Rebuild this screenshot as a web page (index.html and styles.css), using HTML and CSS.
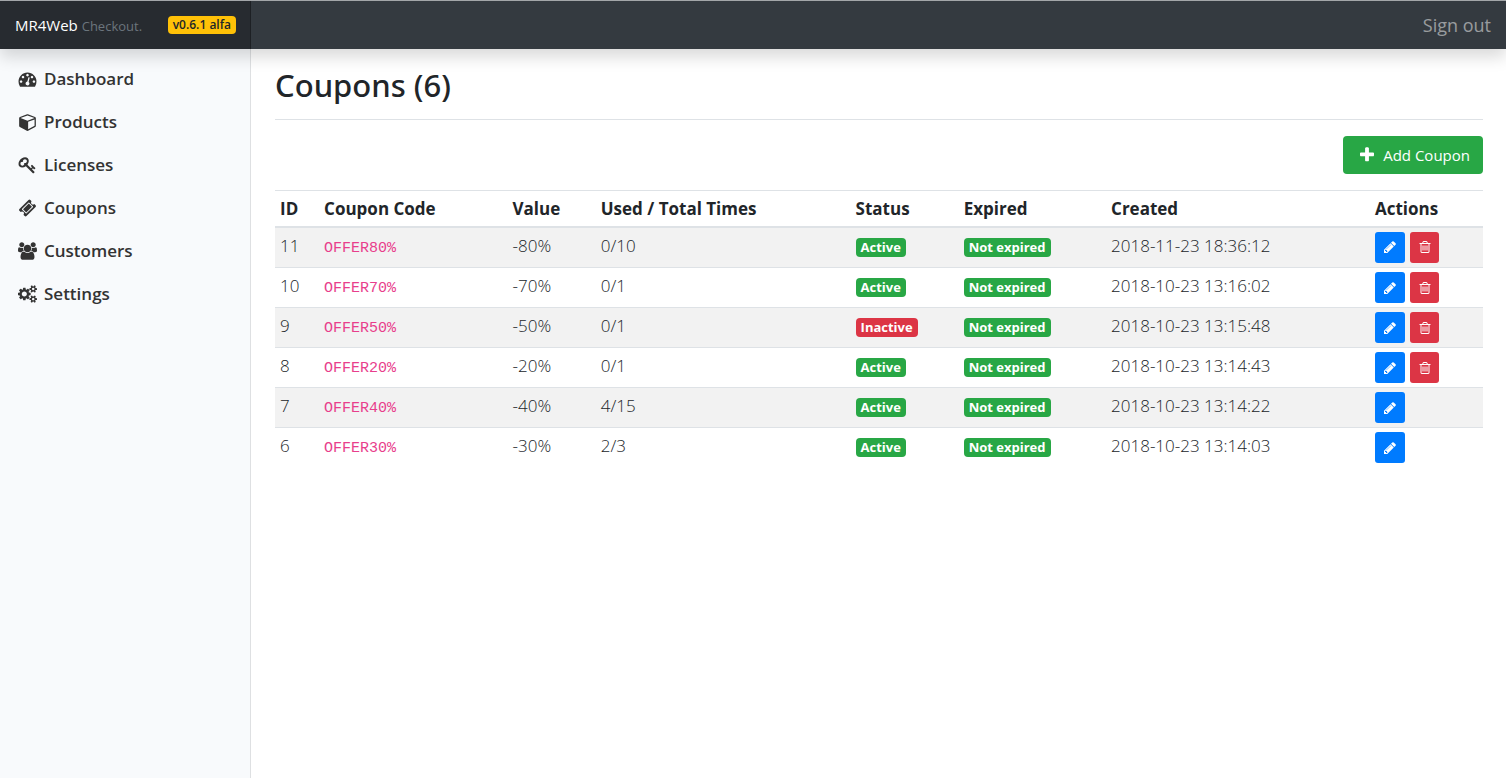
FILE: index.html
```html
<!DOCTYPE html>
<html lang="en">
<head>
<meta charset="utf-8">
<meta name="viewport" content="width=device-width, initial-scale=1">
<title>Coupons - MR4Web Checkout</title>
<link rel="stylesheet" href="styles.css">
</head>
<body>
<svg class="sprite" aria-hidden="true">
  <symbol id="i-dashboard" viewBox="0 0 1792 1792"><path d="M384 1152q0-53-37.5-90.5t-90.5-37.5-90.5 37.5-37.5 90.5 37.5 90.5 90.5 37.5 90.5-37.5 37.5-90.5zm192-448q0-53-37.5-90.5t-90.5-37.5-90.5 37.5-37.5 90.5 37.5 90.5 90.5 37.5 90.5-37.5 37.5-90.5zm428 481l101-382q6-26-7.5-48.5t-38.5-29.5-48 6.5-30 39.5l-101 382q-60 5-107 43.5t-63 98.5q-20 77 20 146t117 89 146-20 89-117q16-60-6-117t-72-91zm660-33q0-53-37.5-90.5t-90.5-37.5-90.5 37.5-37.5 90.5 37.5 90.5 90.5 37.5 90.5-37.5 37.5-90.5zm-640-640q0-53-37.5-90.5t-90.5-37.5-90.5 37.5-37.5 90.5 37.5 90.5 90.5 37.5 90.5-37.5 37.5-90.5zm448 192q0-53-37.5-90.5t-90.5-37.5-90.5 37.5-37.5 90.5 37.5 90.5 90.5 37.5 90.5-37.5 37.5-90.5zm320 448q0 261-141 483-19 29-54 29h-1402q-35 0-54-29-141-221-141-483 0-182 71-348t191-286 286-191 348-71 348 71 286 191 191 286 71 348z"/></symbol>
  <symbol id="i-cube" viewBox="0 0 1664 1792"><path d="M896 1629l640-349v-636l-640 233v752zm-64-865l698-254-698-254-698 254zm832-252v768q0 35-18 65t-49 47l-704 384q-28 16-61 16t-61-16l-704-384q-31-17-49-47t-18-65v-768q0-40 23-73t61-47l704-256q22-8 44-8t44 8l704 256q38 14 61 47t23 73z"/></symbol>
  <symbol id="i-key" viewBox="0 0 1792 1792"><path d="M832 512q0-80-56-136t-136-56-136 56-56 136q0 42 19 83-41-19-83-19-80 0-136 56t-56 136 56 136 136 56 136-56 56-136q0-42-19-83 41 19 83 19 80 0 136-56t56-136zm851 704q0 17-49 66t-66 49q-9 0-28.5-16t-36.5-33-38.5-40-24.5-26l-96 96 220 220q28 28 28 68 0 42-39 81t-81 39q-40 0-68-28l-671-671q-176 131-365 131-163 0-265.5-102.5t-102.5-265.5q0-160 95-313t248-248 313-95q163 0 265.5 102.5t102.5 265.5q0 189-131 365l355 355 96-96q-3-3-26-24.5t-40-38.5-33-36.5-16-28.5q0-17 49-66t66-49q13 0 23 10 6 6 46 44.5t82 79.5 86.5 86 73 78 28.5 41z"/></symbol>
  <symbol id="i-ticket" viewBox="0 0 1792 1792"><path d="M1024 452l316 316-572 572-316-316zm-211 979l618-618q19-19 19-45t-19-45l-362-362q-18-18-45-18t-45 18l-618 618q-19 19-19 45t19 45l362 362q18 18 45 18t45-18zm889-637l-907 908q-37 37-90.5 37t-90.5-37l-126-126q56-56 56-136t-56-136-136-56-136 56l-125-126q-37-37-37-90.5t37-90.5l907-906q37-37 90.5-37t90.5 37l125 125q-56 56-56 136t56 136 136 56 136-56l126 125q37 37 37 90.5t-37 90.5z"/></symbol>
  <symbol id="i-users" viewBox="0 0 1920 1792"><path d="M593 896q-162 5-265 128h-134q-82 0-138-40.5t-56-118.5q0-353 124-353 6 0 43.5 21t97.5 42.5 119 21.5q67 0 133-23-5 37-5 66 0 139 81 256zm1071 637q0 120-73 189.5t-194 69.5h-874q-121 0-194-69.5t-73-189.5q0-53 3.5-103.5t14-109 26.5-108.5 43-97.5 62-81 85.5-53.5 111.5-20q10 0 43 21.5t73 48 107 48 135 21.5 135-21.5 107-48 73-48 43-21.5q61 0 111.5 20t85.5 53.5 62 81 43 97.5 26.5 108.5 14 109 3.5 103.5zm-1024-1277q0 106-75 181t-181 75-181-75-75-181 75-181 181-75 181 75 75 181zm704 384q0 159-112.5 271.5t-271.5 112.5-271.5-112.5-112.5-271.5 112.5-271.5 271.5-112.5 271.5 112.5 112.5 271.5zm576 225q0 78-56 118.5t-138 40.5h-134q-103-123-265-128 81-117 81-256 0-29-5-66 66 23 133 23 59 0 119-21.5t97.5-42.5 43.5-21q124 0 124 353zm-128-609q0 106-75 181t-181 75-181-75-75-181 75-181 181-75 181 75 75 181z"/></symbol>
  <symbol id="i-cogs" viewBox="0 0 1920 1792"><path d="M896 896q0-106-75-181t-181-75-181 75-75 181 75 181 181 75 181-75 75-181zm768 512q0-52-38-90t-90-38-90 38-38 90q0 53 37.5 90.5t90.5 37.5 90.5-37.5 37.5-90.5zm0-1024q0-52-38-90t-90-38-90 38-38 90q0 53 37.5 90.5t90.5 37.5 90.5-37.5 37.5-90.5zm-384 421v185q0 10-7 19.5t-16 10.5l-155 24q-11 35-32 76 34 48 90 115 7 11 7 20 0 12-7 19-23 30-82.5 89.5t-78.5 59.5q-11 0-21-7l-115-90q-37 19-77 31-11 108-23 155-7 24-30 24h-186q-11 0-20-7.5t-10-17.5l-23-153q-34-10-75-31l-118 89q-7 7-20 7-11 0-21-8-144-133-144-160 0-9 7-19 10-14 41-53t47-61q-23-44-35-82l-152-24q-10-1-17-9.5t-7-19.5v-185q0-10 7-19.5t16-10.5l155-24q11-35 32-76-34-48-90-115-7-11-7-20 0-12 7-20 22-30 82-89t79-59q11 0 21 7l115 90q34-18 77-32 11-108 23-154 7-24 30-24h186q11 0 20 7.5t10 17.5l23 153q34 10 75 31l118-89q8-7 20-7 11 0 21 8 144 133 144 160 0 8-7 19-12 16-42 54t-45 60q23 48 34 82l152 23q10 2 17 10.5t7 19.5zm640 533v140q0 16-149 31-12 27-30 52 51 113 51 138 0 4-4 7-122 71-124 71-8 0-46-47t-52-68q-20 2-30 2t-30-2q-14 21-52 68t-46 47q-2 0-124-71-4-3-4-7 0-25 51-138-18-25-30-52-149-15-149-31v-140q0-16 149-31 13-29 30-52-51-113-51-138 0-4 4-7 4-2 35-20t59-34 30-16q8 0 46 46.5t52 67.5q20-2 30-2t30 2q51-71 92-112l6-2q4 0 124 70 4 3 4 7 0 25-51 138 17 23 30 52 149 15 149 31zm0-1024v140q0 16-149 31-12 27-30 52 51 113 51 138 0 4-4 7-122 71-124 71-8 0-46-47t-52-68q-20 2-30 2t-30-2q-14 21-52 68t-46 47q-2 0-124-71-4-3-4-7 0-25 51-138-18-25-30-52-149-15-149-31v-140q0-16 149-31 13-29 30-52-51-113-51-138 0-4 4-7 4-2 35-20t59-34 30-16q8 0 46 46.5t52 67.5q20-2 30-2t30 2q51-71 92-112l6-2q4 0 124 70 4 3 4 7 0 25-51 138 17 23 30 52 149 15 149 31z"/></symbol>
  <symbol id="i-plus" viewBox="192 0 1408 1792"><path d="M1600 736v192q0 40-28 68t-68 28h-416v416q0 40-28 68t-68 28h-192q-40 0-68-28t-28-68v-416h-416q-40 0-68-28t-28-68v-192q0-40 28-68t68-28h416v-416q0-40 28-68t68-28h192q40 0 68 28t28 68v416h416q40 0 68 28t28 68z"/></symbol>
  <symbol id="i-pencil" viewBox="0 0 1792 1792"><path d="M491 1536l91-91-235-235-91 91v107h128v128h107zm523-928q0-22-22-22-10 0-17 7l-542 542q-7 7-7 17 0 22 22 22 10 0 17-7l542-542q7-7 7-17zm-54-192l416 416-832 832h-416v-416zm683 96q0 53-37 90l-166 166-416-416 166-165q36-38 90-38 53 0 91 38l235 234q37 39 37 91z"/></symbol>
  <symbol id="i-trash" viewBox="0 0 1792 1792"><path d="M704 736v576q0 14-9 23t-23 9h-64q-14 0-23-9t-9-23v-576q0-14 9-23t23-9h64q14 0 23 9t9 23zm256 0v576q0 14-9 23t-23 9h-64q-14 0-23-9t-9-23v-576q0-14 9-23t23-9h64q14 0 23 9t9 23zm256 0v576q0 14-9 23t-23 9h-64q-14 0-23-9t-9-23v-576q0-14 9-23t23-9h64q14 0 23 9t9 23zm128 724v-948h-896v948q0 22 7 40.5t14.5 27 10.5 8.5h832q3 0 10.5-8.5t14.5-27 7-40.5zm-672-1076h448l-48-117q-7-9-17-11h-317q-10 2-17 11zm928 32v64q0 14-9 23t-23 9h-96v948q0 83-47 143.5t-113 60.5h-832q-66 0-113-58.5t-47-141.5v-952h-96q-14 0-23-9t-9-23v-64q0-14 9-23t23-9h309l70-167q15-37 54-63t79-26h320q40 0 79 26t54 63l70 167h309q14 0 23 9t9 23z"/></symbol>
</svg>

<header class="topbar">
  <div class="brand">
    <a class="brand-link" href="#">MR4Web <small>Checkout.</small></a>
    <span class="badge badge-version">v0.6.1 alfa</span>
  </div>
  <a class="signout" href="#">Sign out</a>
</header>

<div class="layout">
  <nav class="sidebar" aria-label="Main">
    <a class="nav-link" href="#"><svg class="nav-icon" aria-hidden="true"><use href="#i-dashboard"/></svg>Dashboard</a>
    <a class="nav-link" href="#"><svg class="nav-icon" aria-hidden="true"><use href="#i-cube"/></svg>Products</a>
    <a class="nav-link" href="#"><svg class="nav-icon" aria-hidden="true"><use href="#i-key"/></svg>Licenses</a>
    <a class="nav-link" href="#"><svg class="nav-icon" aria-hidden="true"><use href="#i-ticket"/></svg>Coupons</a>
    <a class="nav-link" href="#"><svg class="nav-icon" aria-hidden="true"><use href="#i-users"/></svg>Customers</a>
    <a class="nav-link" href="#"><svg class="nav-icon" aria-hidden="true"><use href="#i-cogs"/></svg>Settings</a>
  </nav>

  <main class="content">
    <h1 class="title">Coupons (6)</h1>
    <div class="toolbar">
      <button class="btn-add" type="button"><svg class="plus-icon" aria-hidden="true"><use href="#i-plus"/></svg>Add Coupon</button>
    </div>
    <table class="coupons">
      <colgroup>
        <col class="c-id"><col class="c-code"><col class="c-value"><col class="c-used"><col class="c-status"><col class="c-expired"><col class="c-created"><col class="c-actions">
      </colgroup>
      <thead>
        <tr><th>ID</th><th>Coupon Code</th><th>Value</th><th>Used / Total Times</th><th>Status</th><th>Expired</th><th>Created</th><th>Actions</th></tr>
      </thead>
      <tbody>
        <tr><td>11</td><td><code>OFFER80%</code></td><td>-80%</td><td>0/10</td><td><span class="badge badge-success">Active</span></td><td><span class="badge badge-success">Not expired</span></td><td>2018-11-23 18:36:12</td><td class="actions-cell"><div class="actions"><button class="btn-icon edit" type="button" aria-label="Edit"><svg class="icon"><use href="#i-pencil"/></svg></button><button class="btn-icon delete" type="button" aria-label="Delete"><svg class="icon"><use href="#i-trash"/></svg></button></div></td></tr>
        <tr><td>10</td><td><code>OFFER70%</code></td><td>-70%</td><td>0/1</td><td><span class="badge badge-success">Active</span></td><td><span class="badge badge-success">Not expired</span></td><td>2018-10-23 13:16:02</td><td class="actions-cell"><div class="actions"><button class="btn-icon edit" type="button" aria-label="Edit"><svg class="icon"><use href="#i-pencil"/></svg></button><button class="btn-icon delete" type="button" aria-label="Delete"><svg class="icon"><use href="#i-trash"/></svg></button></div></td></tr>
        <tr><td>9</td><td><code>OFFER50%</code></td><td>-50%</td><td>0/1</td><td><span class="badge badge-danger">Inactive</span></td><td><span class="badge badge-success">Not expired</span></td><td>2018-10-23 13:15:48</td><td class="actions-cell"><div class="actions"><button class="btn-icon edit" type="button" aria-label="Edit"><svg class="icon"><use href="#i-pencil"/></svg></button><button class="btn-icon delete" type="button" aria-label="Delete"><svg class="icon"><use href="#i-trash"/></svg></button></div></td></tr>
        <tr><td>8</td><td><code>OFFER20%</code></td><td>-20%</td><td>0/1</td><td><span class="badge badge-success">Active</span></td><td><span class="badge badge-success">Not expired</span></td><td>2018-10-23 13:14:43</td><td class="actions-cell"><div class="actions"><button class="btn-icon edit" type="button" aria-label="Edit"><svg class="icon"><use href="#i-pencil"/></svg></button><button class="btn-icon delete" type="button" aria-label="Delete"><svg class="icon"><use href="#i-trash"/></svg></button></div></td></tr>
        <tr><td>7</td><td><code>OFFER40%</code></td><td>-40%</td><td>4/15</td><td><span class="badge badge-success">Active</span></td><td><span class="badge badge-success">Not expired</span></td><td>2018-10-23 13:14:22</td><td class="actions-cell"><div class="actions"><button class="btn-icon edit" type="button" aria-label="Edit"><svg class="icon"><use href="#i-pencil"/></svg></button></div></td></tr>
        <tr><td>6</td><td><code>OFFER30%</code></td><td>-30%</td><td>2/3</td><td><span class="badge badge-success">Active</span></td><td><span class="badge badge-success">Not expired</span></td><td>2018-10-23 13:14:03</td><td class="actions-cell"><div class="actions"><button class="btn-icon edit" type="button" aria-label="Edit"><svg class="icon"><use href="#i-pencil"/></svg></button></div></td></tr>
      </tbody>
    </table>
  </main>
</div>
</body>
</html>
```
FILE: styles.css
```css
*, *::before, *::after { box-sizing: border-box; }

:root { --side: 251px; }

body {
  margin: 0;
  min-height: 100vh;
  display: flex;
  flex-direction: column;
  border-top: 1px solid #a3a6a9;
  background: #fff;
  color: #212529;
  font-family: "Open Sans", "Noto Sans", sans-serif;
  font-size: 17px;
  font-weight: 300;
  line-height: 24px;
}

a { text-decoration: none; }
button { font: inherit; border: 0; cursor: pointer; }
svg { fill: currentColor; }
.sprite { position: absolute; width: 0; height: 0; }

.topbar {
  position: sticky;
  top: 0;
  z-index: 2;
  display: flex;
  align-items: stretch;
  justify-content: space-between;
  height: 48px;
  background: #343a40;
  box-shadow: 0 8px 16px rgba(0, 0, 0, .15);
}
.brand {
  display: flex;
  align-items: center;
  justify-content: space-between;
  width: var(--side);
  padding: 0 15px;
  background: rgba(0, 0, 0, .25);
  box-shadow: inset -1px 0 0 rgba(0, 0, 0, .25);
}
.brand-link { color: #fff; font-size: 15px; font-weight: 400; }
.brand-link small { color: #6c757d; font-size: 13px; }
.signout {
  display: flex;
  align-items: center;
  padding: 0 15px;
  color: rgba(255, 255, 255, .5);
  font-size: 18px;
  font-weight: 400;
}

.badge {
  display: inline-block;
  padding: 0 5px;
  border-radius: 4px;
  color: #fff;
  font-size: 13px;
  font-weight: 700;
  line-height: 19px;
}
.badge-version { background: #ffc107; color: #212529; font-size: 12px; font-weight: 600; line-height: 18px; }
.badge-success { background: #28a745; }
.badge-danger { background: #dc3545; }

.layout { display: flex; flex: 1; }
.sidebar {
  flex: none;
  width: var(--side);
  padding-top: 8px;
  border-right: 1px solid #dee0e2;
  background: #f8fafc;
}
.nav-link {
  display: flex;
  align-items: center;
  gap: 7px;
  height: 43px;
  padding: 0 18px;
  color: #333;
  font-size: 17px;
  font-weight: 600;
}
.nav-icon { width: 19px; height: 18px; }

.content { flex: 1; min-width: 0; padding: 16px 23px 16px 24px; }
.title {
  margin: 0;
  padding-bottom: 13px;
  border-bottom: 1px solid #dee2e6;
  font-family: "Noto Sans", "Open Sans", sans-serif;
  font-size: 31px;
  font-weight: 500;
  line-height: 41px;
}
.toolbar { display: flex; justify-content: flex-end; padding: 16px 0; }
.btn-add {
  display: flex;
  align-items: center;
  gap: 9px;
  height: 38px;
  padding: 0 13px 0 17px;
  border-radius: 4px;
  background: #28a745;
  color: #fff;
  font-size: 15px;
  font-weight: 400;
}
.plus-icon { width: 14px; height: 18px; }

.coupons { width: 100%; border-collapse: collapse; table-layout: fixed; }
.c-id { width: 3.65%; }
.c-code { width: 15.6%; }
.c-value { width: 7.3%; }
.c-used { width: 21.1%; }
.c-status { width: 8.95%; }
.c-expired { width: 12.2%; }
.c-created { width: 21.85%; }
.c-actions { width: 9.35%; }
.coupons th, .coupons td {
  padding: 6px 5px 3px;
  border-top: 1px solid #dee2e6;
  text-align: left;
  vertical-align: top;
  white-space: nowrap;
}
.coupons th { height: 36px; border-bottom: 2px solid #dee2e6; font-weight: 700; }
.coupons td { height: 40px; }
.coupons tbody tr:first-child td { height: 41px; }
.coupons .actions-cell { padding-top: 4px; }
.coupons tbody tr:nth-child(odd) { background: #f2f2f2; }
code { color: #e83e8c; font-family: "Liberation Mono", monospace; font-size: 15px; font-weight: 400; }

.actions { display: flex; gap: 5px; }
.btn-icon {
  display: flex;
  align-items: center;
  justify-content: center;
  width: 30px;
  height: 31px;
  padding: 0;
  border-radius: 3px;
  color: #fff;
}
.edit { background: #007bff; }
.delete { width: 29px; background: #dc3545; }
.icon { width: 14px; height: 14px; }
```
